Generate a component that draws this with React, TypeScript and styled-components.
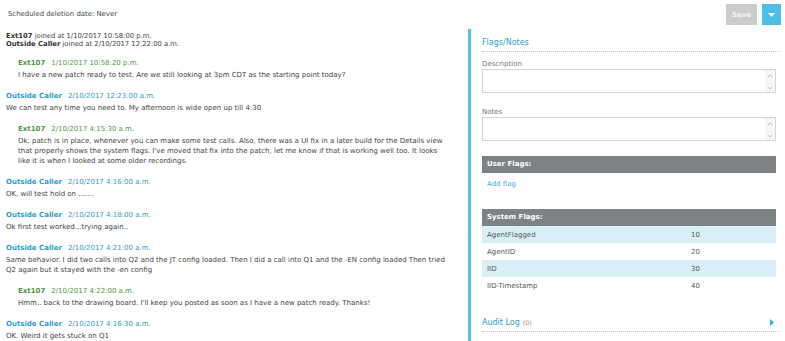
import React from "react";
import styled, { createGlobalStyle } from "styled-components";

const GlobalStyle = createGlobalStyle`
  html, body { margin: 0; padding: 0; background: #fff; }
  body { font-family: "DejaVu Sans", Verdana, sans-serif; color: #444; }
  * { box-sizing: border-box; }
`;

const Page = styled.div`
  width: 785px;
  height: 341px;
  overflow: hidden;
  display: flex;
  flex-direction: column;
`;

const TopBar = styled.div`
  height: 29px;
  flex: none;
  display: flex;
  align-items: flex-start;
  padding: 4px 4px 0 8px;
  gap: 5px;
`;

const DeletionText = styled.div`
  flex: 1;
  font-size: 6.9px;
  line-height: 21px;
  color: #444;
`;

const SaveButton = styled.button`
  width: 31px;
  height: 21px;
  border: none;
  padding: 0;
  background: #cccccc;
  color: #f4f4f4;
  font-family: "DejaVu Sans", Verdana, sans-serif;
  font-weight: bold;
  font-size: 7px;
`;

const DropButton = styled.button`
  width: 19px;
  height: 21px;
  border: none;
  padding: 0;
  background: #4dbfe5;
  display: flex;
  align-items: center;
  justify-content: center;
`;

const Main = styled.div`
  flex: 1;
  min-height: 0;
  display: grid;
  grid-template-columns: 468px 1fr;
`;

const ChatColumn = styled.div`
  padding: 0 19px 0 6px;
  overflow: hidden;
  font-size: 7px;
`;

const JoinList = styled.div`
  padding-top: 3px;
  margin-bottom: 10px;
  line-height: 8px;
  font-size: 6.8px;
  color: #444;
  b { color: #333; }
`;

const Block = styled.div<{ $indent?: boolean }>`
  padding-left: ${(p) => (p.$indent ? "12px" : "0")};
  margin-bottom: 11.5px;
`;

const MsgHead = styled.div<{ $who: "agent" | "caller" }>`
  line-height: 10px;
  margin-bottom: 1.5px;
  color: ${(p) => (p.$who === "agent" ? "#4f9a43" : "#2f9dcb")};
  b { margin-right: 6px; }
`;

const MsgText = styled.div`
  line-height: 10px;
  color: #444;
`;

const SidePanel = styled.div`
  border-left: 3px solid #55c2e8;
  padding: 0 5px 0 11px;
  display: flex;
  flex-direction: column;
`;

const SectionTitle = styled.div`
  padding-top: 8px;
  padding-bottom: 3px;
  line-height: 11px;
  font-size: 8px;
  color: #2f9fc6;
  border-bottom: 1px dotted #c8c8c8;
  display: flex;
  align-items: center;
  small { font-size: 6.2px; color: #888; margin-left: 3px; }
`;

const AuditTitle = styled(SectionTitle)`
  margin-top: 23px;
  padding-top: 0;
  padding-bottom: 3px;
  justify-content: space-between;
  padding-right: 6px;
`;

const FieldLabel = styled.div<{ $top: number }>`
  margin-top: ${(p) => p.$top}px;
  font-size: 7px;
  line-height: 10px;
  color: #777;
`;

const TextBox = styled.div`
  width: 294px;
  height: 24px;
  border: 1px solid #d3d3d3;
  display: flex;
`;

const Area = styled.textarea`
  flex: 1;
  border: none;
  resize: none;
  outline: none;
  padding: 2px;
  font-family: inherit;
`;

const ScrollArrows = styled.div`
  width: 10px;
  background: #f6f6f6;
  display: flex;
  flex-direction: column;
  justify-content: space-between;
  align-items: center;
  padding: 4px 0 2px;
`;

const BarHeader = styled.div<{ $top: number }>`
  margin-top: ${(p) => p.$top}px;
  width: 294px;
  height: 17px;
  background: #7d8285;
  color: #fff;
  font-weight: bold;
  font-size: 7px;
  line-height: 17px;
  padding-left: 5px;
`;

const AddFlag = styled.a`
  margin-top: 6px;
  padding-left: 5px;
  font-size: 7px;
  line-height: 10px;
  color: #38b2e0;
  text-decoration: none;
`;

const FlagTable = styled.div`
  width: 294px;
`;

const FlagRow = styled.div<{ $shade: boolean }>`
  height: 17px;
  display: grid;
  grid-template-columns: 204px 1fr;
  align-items: center;
  padding-left: 5px;
  font-size: 7px;
  color: #555;
  background: ${(p) => (p.$shade ? "#d8eff8" : "#fff")};
`;

type Msg = { who: "agent" | "caller"; name: string; time: string; text: string };

const messages: Msg[] = [
  { who: "agent", name: "Ext107", time: "1/10/2017 10:58:20 p.m.", text: "I have a new patch ready to test. Are we still looking at 3pm CDT as the starting point today?" },
  { who: "caller", name: "Outside Caller", time: "2/10/2017 12:23:00 a.m.", text: "We can test any time you need to. My afternoon is wide open up till 4:30" },
  { who: "agent", name: "Ext107", time: "2/10/2017 4:15:30 a.m.", text: "Ok, patch is in place, whenever you can make some test calls. Also, there was a UI fix in a later build for the Details view that properly shows the system flags. I've moved that fix into the patch, let me know if that is working well too. It looks like it is when I looked at some older recordings." },
  { who: "caller", name: "Outside Caller", time: "2/10/2017 4:16:00 a.m.", text: "OK, will test hold on ......." },
  { who: "caller", name: "Outside Caller", time: "2/10/2017 4:18:00 a.m.", text: "Ok first test worked...trying again.." },
  { who: "caller", name: "Outside Caller", time: "2/10/2017 4:21:00 a.m.", text: "Same behavior. I did two calls into Q2 and the JT config loaded. Then I did a call into Q1 and the -EN config loaded Then tried Q2 again but it stayed with the -en config" },
  { who: "agent", name: "Ext107", time: "2/10/2017 4:22:00 a.m.", text: "Hmm.. back to the drawing board. I'll keep you posted as soon as I have a new patch ready. Thanks!" },
  { who: "caller", name: "Outside Caller", time: "2/10/2017 4:16:30 a.m.", text: "OK. Weird it gets stuck on Q1" },
];

const flags = [
  ["AgentFlagged", "10"],
  ["AgentID", "20"],
  ["IID", "30"],
  ["IID-Timestamp", "40"],
];

const Chevron = ({ up }: { up?: boolean }) => (
  <svg width="6" height="4" viewBox="0 0 6 4">
    <path d={up ? "M0.5 3.5 L3 1 L5.5 3.5" : "M0.5 0.5 L3 3 L5.5 0.5"} fill="none" stroke="#b8b8b8" strokeWidth="0.9" />
  </svg>
);

const NoteBox = () => (
  <TextBox>
    <Area />
    <ScrollArrows>
      <Chevron up />
      <Chevron />
    </ScrollArrows>
  </TextBox>
);

export default function App() {
  return (
    <Page>
      <GlobalStyle />
      <TopBar>
        <DeletionText>Scheduled deletion date: Never</DeletionText>
        <SaveButton>Save</SaveButton>
        <DropButton>
          <svg width="7" height="4" viewBox="0 0 7 4">
            <path d="M0 0 H7 L3.5 4 Z" fill="#fff" />
          </svg>
        </DropButton>
      </TopBar>
      <Main>
        <ChatColumn>
          <JoinList>
            <div><b>Ext107</b> joined at 1/10/2017 10:58:00 p.m.</div>
            <div><b>Outside Caller</b> joined at 2/10/2017 12:22:00 a.m.</div>
          </JoinList>
          {messages.map((m, i) => (
            <Block key={i} $indent={m.who === "agent"}>
              <MsgHead $who={m.who}>
                <b>{m.name}</b>
                {m.time}
              </MsgHead>
              <MsgText>{m.text}</MsgText>
            </Block>
          ))}
        </ChatColumn>
        <SidePanel>
          <SectionTitle>Flags/Notes</SectionTitle>
          <FieldLabel $top={7}>Description</FieldLabel>
          <NoteBox />
          <FieldLabel $top={14}>Notes</FieldLabel>
          <NoteBox />
          <BarHeader $top={15}>User Flags:</BarHeader>
          <AddFlag href="#">Add flag</AddFlag>
          <BarHeader $top={20}>System Flags:</BarHeader>
          <FlagTable>
            {flags.map(([k, v], i) => (
              <FlagRow key={k} $shade={i % 2 === 0}>
                <span>{k}</span>
                <span>{v}</span>
              </FlagRow>
            ))}
          </FlagTable>
          <AuditTitle>
            <span>
              Audit Log<small>(0)</small>
            </span>
            <svg width="4" height="7" viewBox="0 0 4 7">
              <path d="M0 0 L4 3.5 L0 7 Z" fill="#3aaedb" />
            </svg>
          </AuditTitle>
        </SidePanel>
      </Main>
    </Page>
  );
}
